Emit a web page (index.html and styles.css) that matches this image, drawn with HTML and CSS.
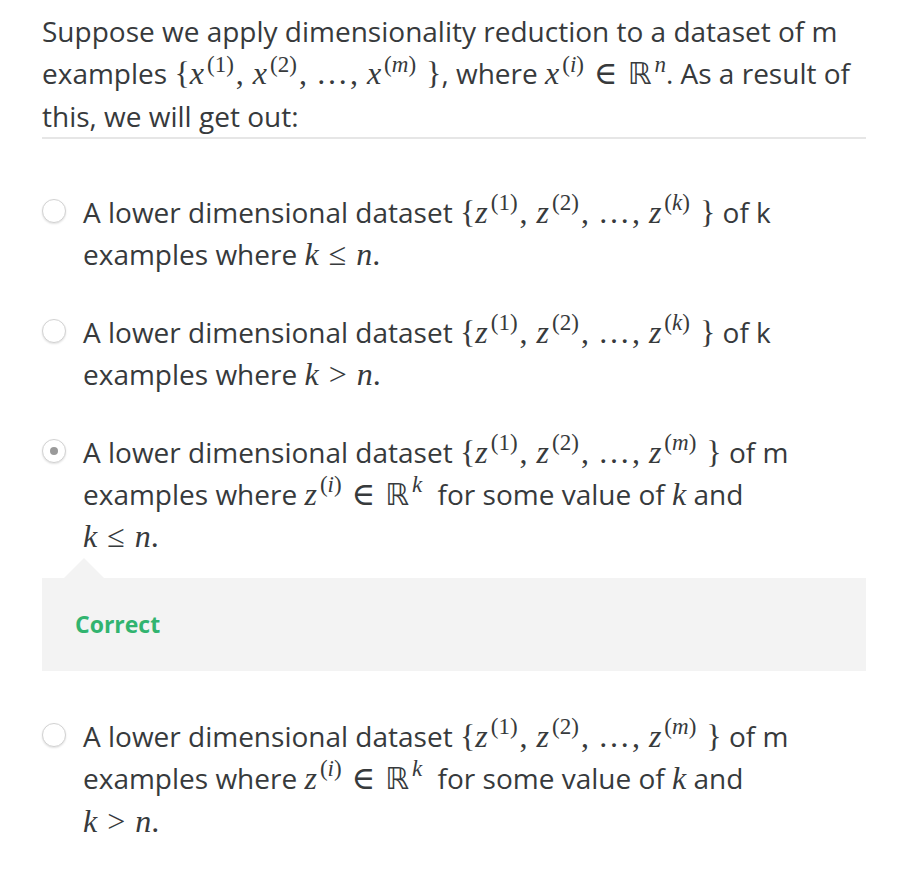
FILE: index.html
```html
<!DOCTYPE html>
<html>
<head>
<meta charset="utf-8">
<link rel="stylesheet" href="styles.css">
</head>
<body>
<div class="quiz">
  <div class="question">
    Suppose we apply dimensionality reduction to a dataset of m examples <span class="m">{<i>x</i><sup>(1)</sup><span class="c">,</span><i>x</i><sup>(2)</sup><span class="c">,</span><span class="dots">…</span><span class="c">,</span><i>x</i><sup class="last">(<i>m</i>)</sup>}</span>, where <span class="m"><i>x</i><sup>(<i>i</i>)</sup><span class="rel">∈</span><span class="bb">ℝ</span><sup><i>n</i></sup></span>. As a result of this, we will get out:
  </div>
  <div class="options">
    <div class="option">
      <span class="radio"></span>
      <div class="text">A lower dimensional dataset <span class="m">{<i>z</i><sup>(1)</sup><span class="c">,</span><i>z</i><sup>(2)</sup><span class="c">,</span><span class="dots">…</span><span class="c">,</span><i>z</i><sup class="last">(<i>k</i>)</sup>}</span> of k examples where <span class="m"><i>k</i><span class="rel">≤</span><i>n</i>.</span></div>
    </div>
    <div class="option">
      <span class="radio"></span>
      <div class="text">A lower dimensional dataset <span class="m">{<i>z</i><sup>(1)</sup><span class="c">,</span><i>z</i><sup>(2)</sup><span class="c">,</span><span class="dots">…</span><span class="c">,</span><i>z</i><sup class="last">(<i>k</i>)</sup>}</span> of k examples where <span class="m"><i>k</i><span class="rel">&gt;</span><i>n</i>.</span></div>
    </div>
    <div class="option">
      <span class="radio"><span class="dot"></span></span>
      <div class="text">A lower dimensional dataset <span class="m">{<i>z</i><sup>(1)</sup><span class="c">,</span><i>z</i><sup>(2)</sup><span class="c">,</span><span class="dots">…</span><span class="c">,</span><i>z</i><sup class="last">(<i>m</i>)</sup>}</span> of m examples where <span class="m"><i>z</i><sup>(<i>i</i>)</sup><span class="rel">∈</span><span class="bb">ℝ</span><sup class="tail"><i>k</i></sup></span> for some value of <span class="m"><i>k</i></span> and <span class="m"><i>k</i><span class="rel">≤</span><i>n</i>.</span></div>
    </div>
    <div class="feedback">
      <span class="caret"></span>
      <div class="correct">Correct</div>
    </div>
    <div class="option">
      <span class="radio"></span>
      <div class="text">A lower dimensional dataset <span class="m">{<i>z</i><sup>(1)</sup><span class="c">,</span><i>z</i><sup>(2)</sup><span class="c">,</span><span class="dots">…</span><span class="c">,</span><i>z</i><sup class="last">(<i>m</i>)</sup>}</span> of m examples where <span class="m"><i>z</i><sup>(<i>i</i>)</sup><span class="rel">∈</span><span class="bb">ℝ</span><sup class="tail"><i>k</i></sup></span> for some value of <span class="m"><i>k</i></span> and <span class="m"><i>k</i><span class="rel">&gt;</span><i>n</i>.</span></div>
    </div>
  </div>
</div>
</body>
</html>
```
FILE: styles.css
```css
html, body {
  margin: 0;
  padding: 0;
  background: #ffffff;
}
body {
  font-family: "Open Sans", "Noto Sans", sans-serif;
  color: #373a3c;
  font-size: 28px;
}
.quiz {
  width: 824px;
  padding: 10px 0 0 42px;
}
.question {
  line-height: 42.3px;
  border-bottom: 2px solid #e6e6e6;
}
.m {
  font-family: "Liberation Serif", "DejaVu Serif", serif;
  font-size: 32px;
  white-space: nowrap;
  line-height: 0;
}
.m i {
  font-style: italic;
}
.c {
  margin-right: 9px;
  margin-left: 2px;
}
.dots {
  letter-spacing: 0;
}
.rel {
  margin: 0 10px;
}
.bb {
  font-family: "DejaVu Sans", sans-serif;
  font-size: 30px;
}
sup {
  font-size: 0.72em;
  line-height: 0;
  vertical-align: 0.55em;
  margin-left: 3px;
}
sup.last {
  margin-right: 10px;
}
sup.tail {
  margin-right: 8px;
}
.options {
  display: flex;
  flex-direction: column;
  padding-top: 52px;
}
.option {
  display: flex;
  align-items: flex-start;
  gap: 17px;
  margin-bottom: 35px;
}
.radio {
  flex: none;
  width: 22px;
  height: 22px;
  margin-top: 8px;
  border: 1px solid #d2d2d2;
  border-radius: 50%;
  box-shadow: 0 1px 2px rgba(0,0,0,0.12);
  background: #fff;
  display: flex;
  align-items: center;
  justify-content: center;
}
.dot {
  width: 8px;
  height: 8px;
  border-radius: 50%;
  background: #9a9a9a;
}
.text {
  width: 725px;
  line-height: 42.4px;
}
.feedback {
  position: relative;
  background: #f3f3f3;
  height: 93px;
  margin-top: -15px;
  margin-bottom: 44px;
  display: flex;
  align-items: center;
  padding-left: 33px;
}
.caret {
  position: absolute;
  left: 22px;
  top: -20px;
  width: 0;
  height: 0;
  border-left: 20px solid transparent;
  border-right: 20px solid transparent;
  border-bottom: 20px solid #f3f3f3;
}
.correct {
  color: #31b46f;
  font-weight: 700;
  font-size: 23px;
}
```
